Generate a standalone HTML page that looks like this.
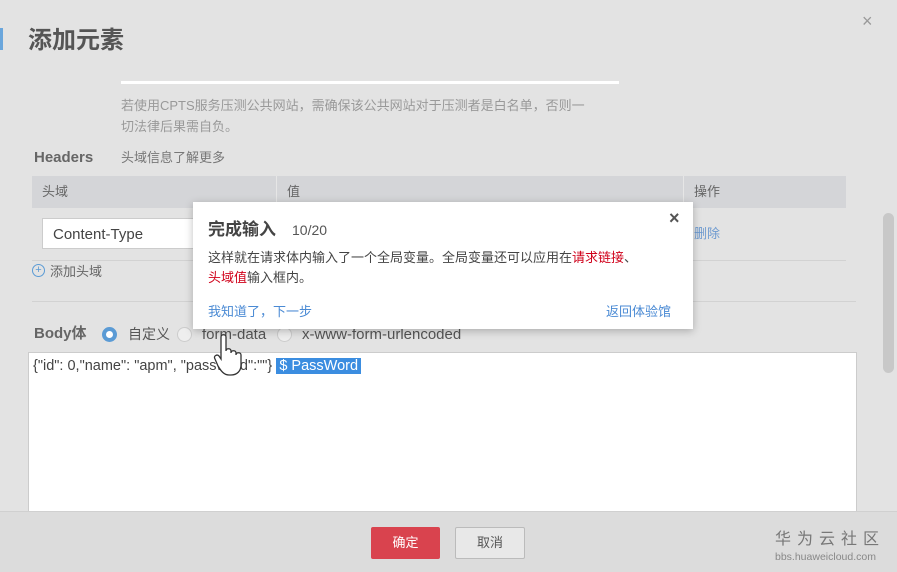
<!DOCTYPE html>
<html><head><meta charset="utf-8"><style>
*{margin:0;padding:0;box-sizing:border-box}
body{width:897px;height:572px;background:#e3e3e3;font-family:"Liberation Sans","Noto Sans CJK SC",sans-serif;position:relative;overflow:hidden;color:#555}
.a{position:absolute;line-height:1.2}
</style></head><body>
<div class="a" style="left:0;top:28px;width:3px;height:22px;background:#6aa6dc"></div>
<div class="a" style="left:28px;top:27px;font-size:24px;font-weight:bold;color:#555">添加元素</div>
<div class="a" style="left:862px;top:11px;font-size:18px;color:#999">×</div>
<div class="a" style="left:121px;top:81px;width:498px;height:3px;background:#fff"></div>
<div class="a" style="left:121px;top:95px;font-size:13px;line-height:21px;color:#999;width:510px">若使用CPTS服务压测公共网站，需确保该公共网站对于压测者是白名单，否则一<br>切法律后果需自负。</div>
<div class="a" style="left:34px;top:149px;font-size:15px;font-weight:bold;color:#666">Headers</div>
<div class="a" style="left:121px;top:150px;font-size:13px;color:#777">头域信息了解更多</div>
<div class="a" style="left:32px;top:176px;width:814px;height:32px;background:#d4d5d8"></div>
<div class="a" style="left:276px;top:176px;width:1px;height:32px;background:#e6e6e6"></div>
<div class="a" style="left:683px;top:176px;width:1px;height:32px;background:#e6e6e6"></div>
<div class="a" style="left:42px;top:184px;font-size:13px;color:#666">头域</div>
<div class="a" style="left:287px;top:184px;font-size:13px;color:#666">值</div>
<div class="a" style="left:694px;top:184px;font-size:13px;color:#666">操作</div>
<div class="a" style="left:42px;top:218px;width:170px;height:31px;background:#fff;border:1px solid #ccc;font-size:15px;color:#444;padding:7px 10px">Content-Type</div>
<div class="a" style="left:694px;top:226px;font-size:13px;color:#6d9ad0">删除</div>
<div class="a" style="left:32px;top:260px;width:814px;height:1px;background:#d2d2d2"></div>
<div class="a" style="left:32px;top:264px;width:13px;height:13px;border:1.5px solid #5b9bd5;border-radius:50%;color:#5b9bd5;font-size:11px;line-height:10px;text-align:center">+</div>
<div class="a" style="left:50px;top:264px;font-size:13px;color:#666">添加头域</div>
<div class="a" style="left:32px;top:301px;width:824px;height:1px;background:#d2d2d2"></div>
<div class="a" style="left:34px;top:325px;font-size:15px;font-weight:bold;color:#666">Body体</div>
<div class="a" style="left:102px;top:327px;width:15px;height:15px;border-radius:50%;background:#5b9bd5;"><div style="margin:4px;width:7px;height:7px;border-radius:50%;background:#fff"></div></div>
<div class="a" style="left:128px;top:326px;font-size:14px;color:#555">自定义</div>
<div class="a" style="left:177px;top:327px;width:15px;height:15px;border-radius:50%;border:1px solid #ccc;background:#eee"></div>
<div class="a" style="left:202px;top:326px;font-size:15px;color:#555">form-data</div>
<div class="a" style="left:277px;top:327px;width:15px;height:15px;border-radius:50%;border:1px solid #ccc;background:#eee"></div>
<div class="a" style="left:302px;top:326px;font-size:15px;color:#555">x-www-form-urlencoded</div>
<div class="a" style="left:28px;top:352px;width:829px;height:170px;background:#fff;border:1px solid #ccc"></div>
<div class="a" style="left:33px;top:358px;font-size:14.5px;color:#444;white-space:nowrap">{"id": 0,"name": "apm", "password":""} <span style="background:#3b8de0;color:#fff;padding:0 3px">$ PassWord</span></div>
<svg class="a" style="left:213px;top:333px" width="34" height="44" viewBox="0 0 34 44"><path d="M8 4c0-3 5-3 5 0v14c0-3 5-3 5 0v2c0-3 5-3 5 0v2c0-3 5-3 5 0v10c0 6-4 10-10 10h-2c-5 0-8-4-11-9L2 26c-2-3 2-5 4-3l2 3z" fill="#fff" stroke="#333" stroke-width="1.3"/></svg>
<div class="a" style="left:883px;top:213px;width:11px;height:160px;border-radius:6px;background:#c8c8c8"></div>
<div class="a" style="left:0;top:511px;width:897px;height:61px;background:#dcdcdc;border-top:1px solid #d0d0d0"></div>
<div class="a" style="left:371px;top:527px;width:69px;height:32px;background:#d9434e;color:#fff;font-size:13px;text-align:center;line-height:32px;border-radius:2px">确定</div>
<div class="a" style="left:455px;top:527px;width:70px;height:32px;background:#e8e8e8;border:1px solid #bbb;color:#555;font-size:13px;text-align:center;line-height:30px;border-radius:2px">取消</div>
<div class="a" style="left:775px;top:531px;font-size:16px;line-height:18px;color:#777;letter-spacing:6px">华为云社区</div>
<div class="a" style="left:775px;top:551px;font-size:10.5px;line-height:12px;color:#888">bbs.huaweicloud.com</div>
<div class="a" style="left:193px;top:202px;width:500px;height:127px;background:#fff;box-shadow:0 2px 8px rgba(0,0,0,.25)">
<div class="a" style="left:15px;top:18px;font-size:17px;font-weight:bold;color:#444">完成输入</div>
<div class="a" style="left:99px;top:20px;font-size:14px;color:#555">10/20</div>
<div class="a" style="left:476px;top:6px;font-size:18px;color:#555;font-weight:bold">×</div>
<div class="a" style="left:15px;top:46px;font-size:13px;line-height:20px;color:#444;width:480px">这样就在请求体内输入了一个全局变量。全局变量还可以应用在<span style="color:#d0021b">请求链接</span>、<br><span style="color:#d0021b">头域值</span>输入框内。</div>
<div class="a" style="left:15px;top:102px;font-size:13px;color:#4a8ad4">我知道了，下一步</div>
<div class="a" style="left:413px;top:102px;font-size:13px;color:#4a8ad4">返回体验馆</div>
</div>
</body></html>
